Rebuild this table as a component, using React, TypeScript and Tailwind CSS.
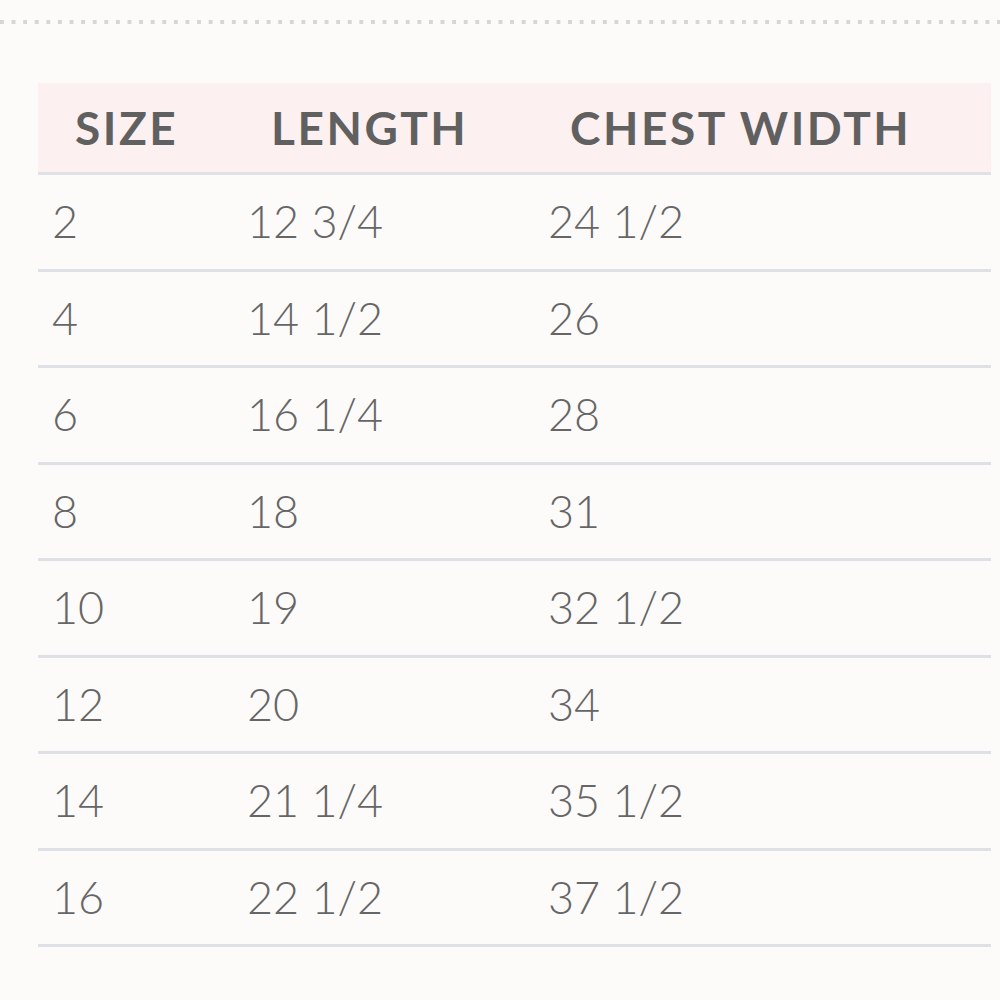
import React from 'react';

const rows: [string, string, string][] = [
  ['2', '12 3/4', '24 1/2'],
  ['4', '14 1/2', '26'],
  ['6', '16 1/4', '28'],
  ['8', '18', '31'],
  ['10', '19', '32 1/2'],
  ['12', '20', '34'],
  ['14', '21 1/4', '35 1/2'],
  ['16', '22 1/2', '37 1/2'],
];

export default function App() {
  return (
    <div className="w-[1000px] h-[1000px] bg-[#fcfbfa] overflow-hidden font-['Lato',sans-serif]">
      {/* dotted rule */}
      <div className="mt-[20px] h-[4px] w-full bg-[linear-gradient(to_right,#d6d6d6_0px,#d6d6d6_4px,transparent_4px,transparent_100%)] bg-[length:11.6px_4px] bg-repeat-x" />

      <div className="ml-[38px] mt-[59px] w-[953px]">
        {/* header */}
        <div className="grid grid-cols-[195px_301px_1fr] h-[92px] bg-[#fdf0f0] border-b-[3px] border-[#e0e0e6] items-center text-[#606060] font-bold text-[46px] tracking-[0.055em] leading-none">
          <div className="pl-[37px]">SIZE</div>
          <div className="pl-[38px]">LENGTH</div>
          <div className="pl-[36px]">CHEST WIDTH</div>
        </div>

        {rows.map(([s, l, c]) => (
          <div
            key={s}
            className="grid grid-cols-[195px_301px_1fr] h-[96.5px] border-b-[3px] border-[#dfdfe6] items-center text-[#666666] text-[45px] leading-none font-light"
          >
            <div className="pl-[14px]">{s}</div>
            <div className="pl-[14px]">{l}</div>
            <div className="pl-[14px]">{c}</div>
          </div>
        ))}
      </div>
    </div>
  );
}
